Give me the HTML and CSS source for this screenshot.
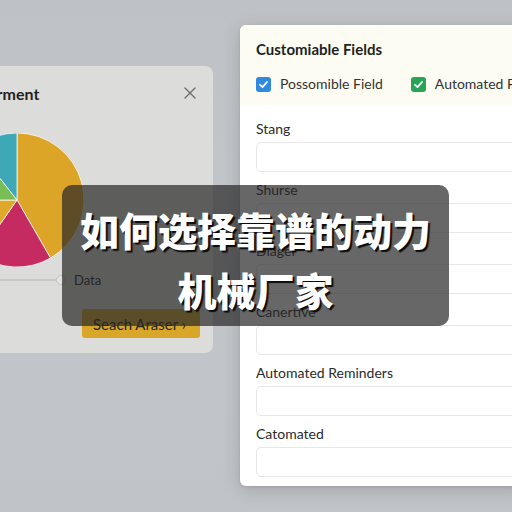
FILE: index.html
```html
<!DOCTYPE html>
<html lang="zh-CN">
<head>
<meta charset="utf-8">
<title>如何选择靠谱的动力机械厂家</title>
<link rel="stylesheet" href="styles.css">
</head>
<body>
<div class="desk">

  <!-- chart window, partly off the left edge -->
  <section class="card">
    <header class="card-head">
      <h2 class="card-title">Deferment</h2>
      <svg class="close" width="12" height="12" viewBox="0 0 12 12">
        <path d="M1 1 L11 11 M11 1 L1 11" stroke="#6b6b6b" stroke-width="1.3" fill="none" stroke-linecap="round"/>
      </svg>
    </header>

    <svg class="pie" width="134" height="134" viewBox="0 0 134 134">
      <g stroke="rgba(255,255,255,0.75)" stroke-width="1" stroke-linejoin="round">
        <path d="M67 67 L67 0 A67 67 0 0 1 100.5 125.02 Z" fill="#dca527"/>
        <path d="M67 67 L100.5 125.02 A67 67 0 0 1 28.57 121.89 Z" fill="#c52a60"/>
        <path d="M67 67 L28.57 121.89 A67 67 0 0 1 0 67 Z" fill="#dfa82a"/>
        <path d="M67 67 L0 67 A67 67 0 0 1 25.75 14.2 Z" fill="#79bd55"/>
        <path d="M67 67 L25.75 14.2 A67 67 0 0 1 67 0 Z" fill="#3ea8b6"/>
      </g>
    </svg>

    <div class="slider-row">
      <div class="track"></div>
      <div class="knob"></div>
      <span class="slider-label">Data</span>
    </div>

    <button class="action">Seach Araser ›</button>
  </section>

  <!-- field settings window -->
  <section class="panel">
    <header class="panel-head">
      <h2 class="panel-title">Customiable Fields</h2>
      <div class="checks">
        <label class="check"><span class="box box-blue"><svg width="11" height="11" viewBox="0 0 11 11"><path d="M2 5.8 L4.5 8.2 L9 3" stroke="#fff" stroke-width="1.8" fill="none" stroke-linecap="round" stroke-linejoin="round"/></svg></span>Possomible Field</label>
        <label class="check"><span class="box box-green"><svg width="11" height="11" viewBox="0 0 11 11"><path d="M2 5.8 L4.5 8.2 L9 3" stroke="#fff" stroke-width="1.8" fill="none" stroke-linecap="round" stroke-linejoin="round"/></svg></span>Automated Fields</label>
      </div>
    </header>

    <div class="panel-body">
      <div class="field"><span class="field-label">Stang</span><div class="input"></div></div>
      <div class="field"><span class="field-label">Shurse</span><div class="input"></div></div>
      <div class="field"><span class="field-label">Diager</span><div class="input"></div></div>
      <div class="field"><span class="field-label">Canertive</span><div class="input"></div></div>
      <div class="field"><span class="field-label">Automated Reminders</span><div class="input"></div></div>
      <div class="field"><span class="field-label">Catomated</span><div class="input"></div></div>
    </div>
  </section>

  <!-- headline banner -->
  <div class="banner">
    <p class="banner-line">如何选择靠谱的动力</p>
    <p class="banner-line">机械厂家</p>
  </div>

</div>
</body>
</html>
```

FILE: styles.css
```css
* {
  box-sizing: border-box;
}

html, body {
  margin: 0;
  padding: 0;
}

body {
  width: 512px;
  height: 512px;
  overflow: hidden;
  font-family: Lato, "Open Sans", "Noto Sans", sans-serif;
  color: #2b2b2b;
}

.desk {
  position: relative;
  width: 512px;
  height: 512px;
  background: linear-gradient(180deg, #bec1c5 0%, #c2c5c9 45%, #c0c3c7 100%);
  overflow: hidden;
}

/* ---------- chart window ---------- */
.card {
  position: absolute;
  left: -150px;
  top: 66px;
  width: 363px;
  height: 287px;
  background: #dcdcdb;
  border-radius: 8px;
  display: flex;
  flex-direction: column;
  align-items: flex-start;
  padding: 16px 17px 15px 0;
}

.card-head {
  width: 100%;
  height: 22px;
  display: flex;
  align-items: center;
  justify-content: space-between;
}

.card-title {
  margin: 0;
  padding-left: 112px;
  font-size: 16px;
  font-weight: 700;
  color: #222;
}

.pie {
  display: block;
  margin-top: 29px;
  margin-left: 100px;
}

.slider-row {
  display: flex;
  align-items: center;
  height: 14px;
  margin-top: 6px;
  margin-left: 100px;
}

.track {
  width: 106px;
  height: 2px;
  background: #c9c9c9;
}

.knob {
  width: 10px;
  height: 10px;
  border-radius: 50%;
  background: #e4e4e4;
  border: 1px solid #c4c4c4;
}

.slider-label {
  margin-left: 8px;
  font-size: 13px;
  color: #262626;
}

.action {
  margin-top: 22px;
  margin-left: 232px;
  width: 118px;
  height: 29px;
  border: none;
  border-radius: 3px;
  background: #d8a72a;
  font-family: Lato, "Open Sans", sans-serif;
  font-size: 15px;
  color: #262626;
  text-align: left;
  padding: 0 0 0 11px;
}

/* ---------- field settings window ---------- */
.panel {
  position: absolute;
  left: 240px;
  top: 25px;
  width: 300px;
  height: 461px;
  background: #ffffff;
  border-radius: 6px;
  box-shadow: 0 4px 18px rgba(0, 0, 0, 0.16), 0 1px 3px rgba(0, 0, 0, 0.08);
  overflow: hidden;
  display: flex;
  flex-direction: column;
}

.panel-head {
  background: #fcfcf3;
  height: 80px;
  padding: 14px 16px 0 16px;
  display: flex;
  flex-direction: column;
}

.panel-title {
  margin: 0;
  height: 20px;
  line-height: 20px;
  font-size: 15px;
  font-weight: 700;
  color: #1f1f1f;
}

.checks {
  margin-top: 17px;
  display: flex;
  gap: 28px;
  white-space: nowrap;
}

.check {
  display: flex;
  align-items: center;
  gap: 9px;
  font-size: 14px;
  color: #333;
  line-height: 16px;
}

.box {
  width: 15px;
  height: 15px;
  border-radius: 3px;
  display: flex;
  align-items: center;
  justify-content: center;
  flex: none;
}

.box-blue {
  background: #2e89df;
}

.box-green {
  background: #27a457;
}

.panel-body {
  padding: 15px 0 0 16px;
  display: flex;
  flex-direction: column;
}

.field {
  display: flex;
  flex-direction: column;
  margin-bottom: 9px;
}

.field-label {
  height: 18px;
  line-height: 18px;
  font-size: 14px;
  color: #2a2a2a;
}

.input {
  margin-top: 4px;
  height: 30px;
  border: 1px solid #e7e7e7;
  border-radius: 5px;
  background: #fff;
}

/* ---------- headline banner ---------- */
.banner {
  position: absolute;
  left: 62px;
  top: 185px;
  width: 387px;
  height: 141px;
  border-radius: 10px;
  background: rgba(38, 38, 38, 0.7);
  display: flex;
  flex-direction: column;
  align-items: center;
  justify-content: center;
  padding-top: 6px;
}

.banner-line {
  margin: 0;
  height: 60px;
  line-height: 60px;
  font-family: "Noto Sans CJK SC", "Noto Sans", sans-serif;
  font-size: 39px;
  font-weight: 900;
  color: #ffffff;
  text-shadow: 2px 2px 1px rgba(0, 0, 0, 0.9);
  white-space: nowrap;
}
```
